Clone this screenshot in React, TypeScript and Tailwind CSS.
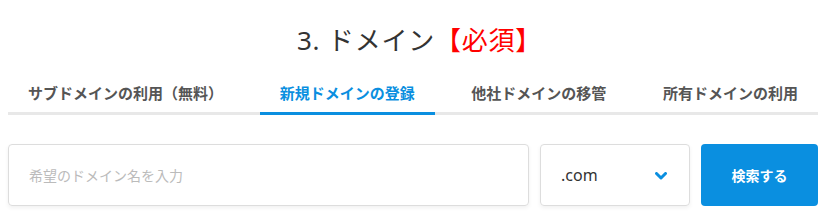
import React, { useState } from "react";

const tabs = ["サブドメインの利用（無料）", "新規ドメインの登録", "他社ドメインの移管", "所有ドメインの利用"];

export default function App() {
  const [active, setActive] = useState(1);
  const [tld, setTld] = useState(".com");

  return (
    <div
      className="w-[839px] h-[221px] bg-white px-2"
      style={{ fontFamily: "'Noto Sans', 'Noto Sans CJK JP', sans-serif" }}
    >
      <h2 className="pt-[22px] text-center text-[26px] leading-[36px] text-[#333] tracking-[0.03em]">
        3. ドメイン<span className="text-[#f00]">【必須】</span>
      </h2>

      <div className="mt-[23px] mr-[13px] flex justify-between border-b-[3px] border-[#e8e8e8]">
        {tabs.map((t, i) => (
          <button
            key={t}
            onClick={() => setActive(i)}
            className={`-mb-[3px] px-5 pb-[9px] pt-[2px] text-[15px] font-bold leading-[20px] border-b-[3px] ${
              i === active ? "border-[#0a8fe0] text-[#0a8fe0]" : "border-transparent text-[#555]"
            }`}
          >
            {t}
          </button>
        ))}
      </div>

      <div className="mt-[29px] mr-[13px] flex gap-[11px]">
        <input
          placeholder="希望のドメイン名を入力"
          className="h-[62px] flex-1 rounded-[4px] border border-[#ddd] px-5 text-[14px] text-[#333] shadow-[0_2px_4px_rgba(0,0,0,0.06)] outline-none placeholder:text-[#bbb]"
        />
        <div className="relative w-[150px] h-[62px] rounded-[4px] border border-[#ddd] shadow-[0_2px_4px_rgba(0,0,0,0.06)]">
          <select
            value={tld}
            onChange={(e) => setTld(e.target.value)}
            className="h-full w-full appearance-none bg-transparent pl-5 text-[16px] text-[#333] outline-none"
          >
            <option>.com</option>
            <option>.net</option>
            <option>.jp</option>
          </select>
          <svg
            className="pointer-events-none absolute right-[22px] top-[27px]"
            width="12"
            height="8"
            viewBox="0 0 12 8"
          >
            <path d="M1.5 1.5 L6 6 L10.5 1.5" fill="none" stroke="#0a8fe0" strokeWidth="3" strokeLinecap="round" strokeLinejoin="round" />
          </svg>
        </div>
        <button className="h-[62px] w-[117px] rounded-[4px] bg-[#0a8fe0] text-[14px] font-bold text-white">
          検索する
        </button>
      </div>
    </div>
  );
}
